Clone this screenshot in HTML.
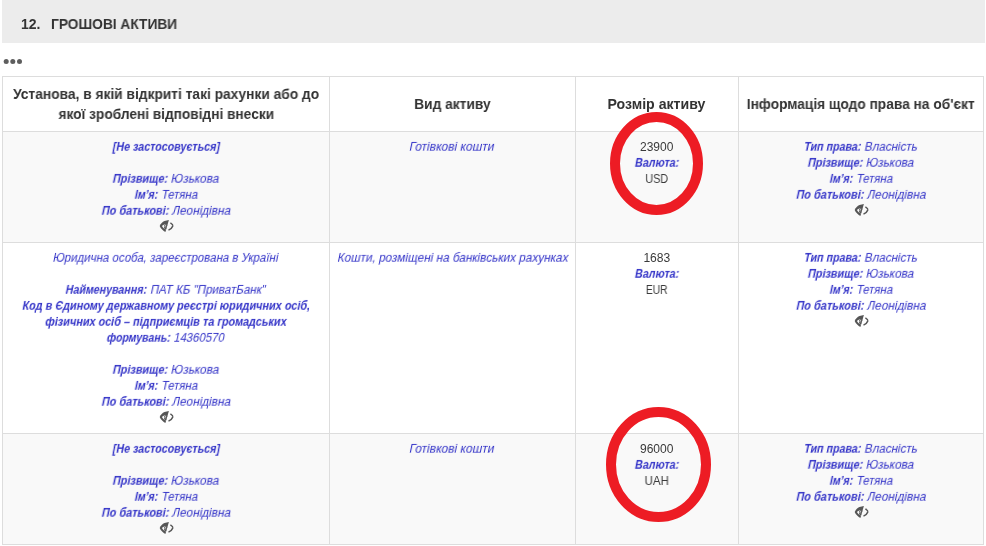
<!DOCTYPE html>
<html><head><meta charset="utf-8">
<style>
html,body{margin:0;padding:0;background:#fff;}
body{width:986px;height:546px;position:relative;overflow:hidden;font-family:"Liberation Sans",sans-serif;}
.t,.th{position:absolute;text-align:center;white-space:nowrap;}
.t{font:normal 12px/16px "Liberation Sans",sans-serif;color:#3535c8;}
.th{font:bold 14px/20px "Liberation Sans",sans-serif;color:#333;}
.t b{font-weight:bold;}
.s{display:inline-block;transform-origin:50% 50%;will-change:transform;}
.n{font-style:normal;color:#3a3a3a;}
.g{display:inline-block;white-space:nowrap;}
.gi{display:inline-block;transform-origin:0 50%;white-space:nowrap;}

.hdr{position:absolute;left:2px;top:0;width:983px;height:43px;background:#ececec;}
.hdr span{position:absolute;top:16px;font:bold 14px/16px "Liberation Sans",sans-serif;color:#333;}
.dots{position:absolute;left:3px;top:58px;}
.dots i{position:absolute;top:0;width:6px;height:6px;border-radius:50%;background:#555;}
.bg{position:absolute;left:2px;width:982px;}
.hl{position:absolute;left:2px;width:982px;height:1px;background:#ddd;}
.vl{position:absolute;top:76px;width:1px;height:469px;background:#ddd;}
.eye{position:absolute;width:20px;height:20px;}
</style></head><body>
<div class="hdr"><span style="left:19px;will-change:transform">12.</span><span style="left:49px;transform:scaleX(0.98);transform-origin:0 0;will-change:transform">ГРОШОВІ АКТИВИ</span></div>
<svg style="position:absolute;left:0;top:50px" width="30" height="20"><g fill="#5e5e5e"><circle cx="6.2" cy="11.4" r="2.5"/><circle cx="12.8" cy="11.4" r="2.5"/><circle cx="19.5" cy="11.4" r="2.5"/></g></svg>
<div class="bg" style="top:131px;height:111px;background:#f9f9f9"></div>
<div class="bg" style="top:433px;height:111px;background:#f9f9f9"></div>
<div class="hl" style="top:76px"></div>
<div class="hl" style="top:131px"></div>
<div class="hl" style="top:242px"></div>
<div class="hl" style="top:433px"></div>
<div class="hl" style="top:544px"></div>
<div class="vl" style="left:2px"></div>
<div class="vl" style="left:329px"></div>
<div class="vl" style="left:575px"></div>
<div class="vl" style="left:738px"></div>
<div class="vl" style="left:983px"></div>
<div class="th" style="left:3px;top:84px;width:326px"><span class=s style="transform:translateX(0.49px) scaleX(0.983)">Установа, в якій відкриті такі рахунки або до</span></div>
<div class="th" style="left:3px;top:104px;width:326px"><span class=s style="transform:translateX(-0.00px) scaleX(0.977)">якої зроблені відповідні внески</span></div>
<div class="th" style="left:330px;top:94px;width:245px"><span class=s style="transform:translateX(-0.49px) scaleX(0.982)">Вид активу</span></div>
<div class="th" style="left:576px;top:94px;width:162px"><span class=s style="transform:translateX(-1.01px) scaleX(1.010)">Розмір активу</span></div>
<div class="th" style="left:739px;top:94px;width:244px"><span class=s style="transform:translateX(-0.49px) scaleX(0.981)">Інформація щодо права на об'єкт</span></div>
<div class="t" style="left:3px;top:139px;width:326px"><span class=s style="transform:translateX(0.45px) scaleX(0.893) skewX(-12deg)"><b>[Не застосовується]</b></span></div>
<div class="t" style="left:3px;top:171px;width:326px"><span class=s style="transform:translateX(-0.00px) scaleX(1.019) skewX(-12deg)"><span class=g style="width:54.12px"><b class=gi style="transform:scaleX(0.89)">Прізвище:</b></span><span class=g style="width:50.36px"><span class=gi style="transform:scaleX(0.965)">&nbsp;Юзькова</span></span></span></div>
<div class="t" style="left:3px;top:187px;width:326px"><span class=s style="transform:translateX(0.49px) scaleX(0.984) skewX(-12deg)"><span class=g style="width:23.63px"><b class=gi style="transform:scaleX(0.89)">Ім’я:</b></span><span class=g style="width:40.11px"><span class=gi style="transform:scaleX(0.965)">&nbsp;Тетяна</span></span></span></div>
<div class="t" style="left:3px;top:203px;width:326px"><span class=s style="transform:translateX(1.02px) scaleX(1.016) skewX(-12deg)"><span class=g style="width:66.32px"><b class=gi style="transform:scaleX(0.89)">По батькові:</b></span><span class=g style="width:60.99px"><span class=gi style="transform:scaleX(0.965)">&nbsp;Леонідівна</span></span></span></div>
<div class="t" style="left:330px;top:139px;width:245px"><span class=s style="transform:translateX(-0.50px) scaleX(0.999) skewX(-12deg)">Готівкові кошти</span></div>
<div class="t" style="left:576px;top:139px;width:162px"><span class=s style="transform:translateX(-0.00px) scaleX(1.000)"><span class=n>23900</span></span></div>
<div class="t" style="left:576px;top:155px;width:162px"><span class=s style="transform:translateX(0.45px) scaleX(0.892) skewX(-12deg)"><b>Валюта:</b></span></div>
<div class="t" style="left:576px;top:171px;width:162px"><span class=s style="transform:translateX(-0.00px) scaleX(0.892)"><span class=n>USD</span></span></div>
<div class="t" style="left:739px;top:139px;width:244px"><span class=s style="transform:translateX(-0.50px) scaleX(1.003) skewX(-12deg)"><span class=g style="width:56.95px"><b class=gi style="transform:scaleX(0.89)">Тип права:</b></span><span class=g style="width:56.03px"><span class=gi style="transform:scaleX(0.965)">&nbsp;Власність</span></span></span></div>
<div class="t" style="left:739px;top:155px;width:244px"><span class=s style="transform:translateX(-0.00px) scaleX(1.017) skewX(-12deg)"><span class=g style="width:54.12px"><b class=gi style="transform:scaleX(0.89)">Прізвище:</b></span><span class=g style="width:50.36px"><span class=gi style="transform:scaleX(0.965)">&nbsp;Юзькова</span></span></span></div>
<div class="t" style="left:739px;top:171px;width:244px"><span class=s style="transform:translateX(0.49px) scaleX(0.984) skewX(-12deg)"><span class=g style="width:23.63px"><b class=gi style="transform:scaleX(0.89)">Ім’я:</b></span><span class=g style="width:40.11px"><span class=gi style="transform:scaleX(0.965)">&nbsp;Тетяна</span></span></span></div>
<div class="t" style="left:739px;top:187px;width:244px"><span class=s style="transform:translateX(1.02px) scaleX(1.023) skewX(-12deg)"><span class=g style="width:66.32px"><b class=gi style="transform:scaleX(0.89)">По батькові:</b></span><span class=g style="width:60.99px"><span class=gi style="transform:scaleX(0.965)">&nbsp;Леонідівна</span></span></span></div>
<div class="t" style="left:3px;top:441px;width:326px"><span class=s style="transform:translateX(0.45px) scaleX(0.893) skewX(-12deg)"><b>[Не застосовується]</b></span></div>
<div class="t" style="left:3px;top:473px;width:326px"><span class=s style="transform:translateX(-0.00px) scaleX(1.019) skewX(-12deg)"><span class=g style="width:54.12px"><b class=gi style="transform:scaleX(0.89)">Прізвище:</b></span><span class=g style="width:50.36px"><span class=gi style="transform:scaleX(0.965)">&nbsp;Юзькова</span></span></span></div>
<div class="t" style="left:3px;top:489px;width:326px"><span class=s style="transform:translateX(0.49px) scaleX(0.984) skewX(-12deg)"><span class=g style="width:23.63px"><b class=gi style="transform:scaleX(0.89)">Ім’я:</b></span><span class=g style="width:40.11px"><span class=gi style="transform:scaleX(0.965)">&nbsp;Тетяна</span></span></span></div>
<div class="t" style="left:3px;top:505px;width:326px"><span class=s style="transform:translateX(1.02px) scaleX(1.016) skewX(-12deg)"><span class=g style="width:66.32px"><b class=gi style="transform:scaleX(0.89)">По батькові:</b></span><span class=g style="width:60.99px"><span class=gi style="transform:scaleX(0.965)">&nbsp;Леонідівна</span></span></span></div>
<div class="t" style="left:330px;top:441px;width:245px"><span class=s style="transform:translateX(-0.50px) scaleX(0.999) skewX(-12deg)">Готівкові кошти</span></div>
<div class="t" style="left:576px;top:441px;width:162px"><span class=s style="transform:translateX(-0.00px) scaleX(1.003)"><span class=n>96000</span></span></div>
<div class="t" style="left:576px;top:457px;width:162px"><span class=s style="transform:translateX(0.45px) scaleX(0.892) skewX(-12deg)"><b>Валюта:</b></span></div>
<div class="t" style="left:576px;top:473px;width:162px"><span class=s style="transform:translateX(-0.00px) scaleX(0.954)"><span class=n>UAH</span></span></div>
<div class="t" style="left:739px;top:441px;width:244px"><span class=s style="transform:translateX(-0.50px) scaleX(1.003) skewX(-12deg)"><span class=g style="width:56.95px"><b class=gi style="transform:scaleX(0.89)">Тип права:</b></span><span class=g style="width:56.03px"><span class=gi style="transform:scaleX(0.965)">&nbsp;Власність</span></span></span></div>
<div class="t" style="left:739px;top:457px;width:244px"><span class=s style="transform:translateX(-0.00px) scaleX(1.017) skewX(-12deg)"><span class=g style="width:54.12px"><b class=gi style="transform:scaleX(0.89)">Прізвище:</b></span><span class=g style="width:50.36px"><span class=gi style="transform:scaleX(0.965)">&nbsp;Юзькова</span></span></span></div>
<div class="t" style="left:739px;top:473px;width:244px"><span class=s style="transform:translateX(0.49px) scaleX(0.984) skewX(-12deg)"><span class=g style="width:23.63px"><b class=gi style="transform:scaleX(0.89)">Ім’я:</b></span><span class=g style="width:40.11px"><span class=gi style="transform:scaleX(0.965)">&nbsp;Тетяна</span></span></span></div>
<div class="t" style="left:739px;top:489px;width:244px"><span class=s style="transform:translateX(1.02px) scaleX(1.023) skewX(-12deg)"><span class=g style="width:66.32px"><b class=gi style="transform:scaleX(0.89)">По батькові:</b></span><span class=g style="width:60.99px"><span class=gi style="transform:scaleX(0.965)">&nbsp;Леонідівна</span></span></span></div>
<div class="t" style="left:3px;top:250px;width:326px"><span class=s style="transform:translateX(-0.00px) scaleX(0.956) skewX(-12deg)">Юридична особа, зареєстрована в Україні</span></div>
<div class="t" style="left:3px;top:282px;width:326px"><span class=s style="transform:translateX(-0.50px) scaleX(0.997) skewX(-12deg)"><span class=g style="width:81.50px"><b class=gi style="transform:scaleX(0.89)">Найменування:</b></span><span class=g style="width:118.68px"><span class=gi style="transform:scaleX(0.965)">&nbsp;ПАТ КБ "ПриватБанк"</span></span></span></div>
<div class="t" style="left:3px;top:298px;width:326px"><span class=s style="transform:translateX(-0.00px) scaleX(0.908) skewX(-12deg)"><b>Код в Єдиному державному реєстрі юридичних осіб,</b></span></div>
<div class="t" style="left:3px;top:314px;width:326px"><span class=s style="transform:translateX(-0.00px) scaleX(0.907) skewX(-12deg)"><b>фізичних осіб – підприємців та громадських</b></span></div>
<div class="t" style="left:3px;top:330px;width:326px"><span class=s style="transform:translateX(-0.00px) scaleX(0.983) skewX(-12deg)"><span class=g style="width:64.75px"><b class=gi style="transform:scaleX(0.89)">формувань:</b></span><span class=g style="width:54.75px"><span class=gi style="transform:scaleX(0.965)">&nbsp;14360570</span></span></span></div>
<div class="t" style="left:3px;top:362px;width:326px"><span class=s style="transform:translateX(-0.00px) scaleX(1.019) skewX(-12deg)"><span class=g style="width:54.12px"><b class=gi style="transform:scaleX(0.89)">Прізвище:</b></span><span class=g style="width:50.36px"><span class=gi style="transform:scaleX(0.965)">&nbsp;Юзькова</span></span></span></div>
<div class="t" style="left:3px;top:378px;width:326px"><span class=s style="transform:translateX(0.49px) scaleX(0.984) skewX(-12deg)"><span class=g style="width:23.63px"><b class=gi style="transform:scaleX(0.89)">Ім’я:</b></span><span class=g style="width:40.11px"><span class=gi style="transform:scaleX(0.965)">&nbsp;Тетяна</span></span></span></div>
<div class="t" style="left:3px;top:394px;width:326px"><span class=s style="transform:translateX(1.02px) scaleX(1.016) skewX(-12deg)"><span class=g style="width:66.32px"><b class=gi style="transform:scaleX(0.89)">По батькові:</b></span><span class=g style="width:60.99px"><span class=gi style="transform:scaleX(0.965)">&nbsp;Леонідівна</span></span></span></div>
<div class="t" style="left:330px;top:250px;width:245px"><span class=s style="transform:translateX(0.49px) scaleX(0.981) skewX(-12deg)">Кошти, розміщені на банківських рахунках</span></div>
<div class="t" style="left:576px;top:250px;width:162px"><span class=s style="transform:translateX(-0.50px) scaleX(1.008)"><span class=n>1683</span></span></div>
<div class="t" style="left:576px;top:266px;width:162px"><span class=s style="transform:translateX(0.45px) scaleX(0.892) skewX(-12deg)"><b>Валюта:</b></span></div>
<div class="t" style="left:576px;top:282px;width:162px"><span class=s style="transform:translateX(-0.00px) scaleX(0.854)"><span class=n>EUR</span></span></div>
<div class="t" style="left:739px;top:250px;width:244px"><span class=s style="transform:translateX(-0.50px) scaleX(1.003) skewX(-12deg)"><span class=g style="width:56.95px"><b class=gi style="transform:scaleX(0.89)">Тип права:</b></span><span class=g style="width:56.03px"><span class=gi style="transform:scaleX(0.965)">&nbsp;Власність</span></span></span></div>
<div class="t" style="left:739px;top:266px;width:244px"><span class=s style="transform:translateX(-0.00px) scaleX(1.017) skewX(-12deg)"><span class=g style="width:54.12px"><b class=gi style="transform:scaleX(0.89)">Прізвище:</b></span><span class=g style="width:50.36px"><span class=gi style="transform:scaleX(0.965)">&nbsp;Юзькова</span></span></span></div>
<div class="t" style="left:739px;top:282px;width:244px"><span class=s style="transform:translateX(0.49px) scaleX(0.984) skewX(-12deg)"><span class=g style="width:23.63px"><b class=gi style="transform:scaleX(0.89)">Ім’я:</b></span><span class=g style="width:40.11px"><span class=gi style="transform:scaleX(0.965)">&nbsp;Тетяна</span></span></span></div>
<div class="t" style="left:739px;top:298px;width:244px"><span class=s style="transform:translateX(1.02px) scaleX(1.023) skewX(-12deg)"><span class=g style="width:66.32px"><b class=gi style="transform:scaleX(0.89)">По батькові:</b></span><span class=g style="width:60.99px"><span class=gi style="transform:scaleX(0.965)">&nbsp;Леонідівна</span></span></span></div>
<svg class="eye" style="left:156px;top:216px" width="20" height="20" viewBox="0 0 20 20"><defs><clipPath id="ec0"><path d="M0,0 L14.04,0 L8.2,20 L0,20 Z"/></clipPath></defs><path d="M12.9,3.9 L9.4,15.9 C7.2,14.8 4.8,12.6 3.7,9.9 C4.7,7.6 6.4,5.8 8.5,5 C10,4.5 11.4,4.1 12.9,3.9 Z" fill="#555"/><path d="M11.7,8 L10.1,13.5 C8.4,13 7,11.8 5.9,10.1 C7,8.8 9.1,8 11.7,8 Z" fill="#f9f9f9"/><circle cx="10.6" cy="10.7" r="2.6" fill="#555" clip-path="url(#ec0)"/><path d="M10.1,9.3 C9.1,9.5 8.7,10.4 9.1,11.3" stroke="#f9f9f9" stroke-width="0.8" fill="none"/><path d="M14.4,6.9 C16.2,8 17,9.2 16.8,10 C16.2,11.8 14.6,13.2 12.5,14.1" stroke="#555" stroke-width="1.5" fill="none"/></svg>
<svg class="eye" style="left:851px;top:200px" width="20" height="20" viewBox="0 0 20 20"><defs><clipPath id="ec1"><path d="M0,0 L14.04,0 L8.2,20 L0,20 Z"/></clipPath></defs><path d="M12.9,3.9 L9.4,15.9 C7.2,14.8 4.8,12.6 3.7,9.9 C4.7,7.6 6.4,5.8 8.5,5 C10,4.5 11.4,4.1 12.9,3.9 Z" fill="#555"/><path d="M11.7,8 L10.1,13.5 C8.4,13 7,11.8 5.9,10.1 C7,8.8 9.1,8 11.7,8 Z" fill="#f9f9f9"/><circle cx="10.6" cy="10.7" r="2.6" fill="#555" clip-path="url(#ec1)"/><path d="M10.1,9.3 C9.1,9.5 8.7,10.4 9.1,11.3" stroke="#f9f9f9" stroke-width="0.8" fill="none"/><path d="M14.4,6.9 C16.2,8 17,9.2 16.8,10 C16.2,11.8 14.6,13.2 12.5,14.1" stroke="#555" stroke-width="1.5" fill="none"/></svg>
<svg class="eye" style="left:156px;top:407px" width="20" height="20" viewBox="0 0 20 20"><defs><clipPath id="ec2"><path d="M0,0 L14.04,0 L8.2,20 L0,20 Z"/></clipPath></defs><path d="M12.9,3.9 L9.4,15.9 C7.2,14.8 4.8,12.6 3.7,9.9 C4.7,7.6 6.4,5.8 8.5,5 C10,4.5 11.4,4.1 12.9,3.9 Z" fill="#555"/><path d="M11.7,8 L10.1,13.5 C8.4,13 7,11.8 5.9,10.1 C7,8.8 9.1,8 11.7,8 Z" fill="#fff"/><circle cx="10.6" cy="10.7" r="2.6" fill="#555" clip-path="url(#ec2)"/><path d="M10.1,9.3 C9.1,9.5 8.7,10.4 9.1,11.3" stroke="#fff" stroke-width="0.8" fill="none"/><path d="M14.4,6.9 C16.2,8 17,9.2 16.8,10 C16.2,11.8 14.6,13.2 12.5,14.1" stroke="#555" stroke-width="1.5" fill="none"/></svg>
<svg class="eye" style="left:851px;top:311px" width="20" height="20" viewBox="0 0 20 20"><defs><clipPath id="ec3"><path d="M0,0 L14.04,0 L8.2,20 L0,20 Z"/></clipPath></defs><path d="M12.9,3.9 L9.4,15.9 C7.2,14.8 4.8,12.6 3.7,9.9 C4.7,7.6 6.4,5.8 8.5,5 C10,4.5 11.4,4.1 12.9,3.9 Z" fill="#555"/><path d="M11.7,8 L10.1,13.5 C8.4,13 7,11.8 5.9,10.1 C7,8.8 9.1,8 11.7,8 Z" fill="#fff"/><circle cx="10.6" cy="10.7" r="2.6" fill="#555" clip-path="url(#ec3)"/><path d="M10.1,9.3 C9.1,9.5 8.7,10.4 9.1,11.3" stroke="#fff" stroke-width="0.8" fill="none"/><path d="M14.4,6.9 C16.2,8 17,9.2 16.8,10 C16.2,11.8 14.6,13.2 12.5,14.1" stroke="#555" stroke-width="1.5" fill="none"/></svg>
<svg class="eye" style="left:156px;top:518px" width="20" height="20" viewBox="0 0 20 20"><defs><clipPath id="ec4"><path d="M0,0 L14.04,0 L8.2,20 L0,20 Z"/></clipPath></defs><path d="M12.9,3.9 L9.4,15.9 C7.2,14.8 4.8,12.6 3.7,9.9 C4.7,7.6 6.4,5.8 8.5,5 C10,4.5 11.4,4.1 12.9,3.9 Z" fill="#555"/><path d="M11.7,8 L10.1,13.5 C8.4,13 7,11.8 5.9,10.1 C7,8.8 9.1,8 11.7,8 Z" fill="#f9f9f9"/><circle cx="10.6" cy="10.7" r="2.6" fill="#555" clip-path="url(#ec4)"/><path d="M10.1,9.3 C9.1,9.5 8.7,10.4 9.1,11.3" stroke="#f9f9f9" stroke-width="0.8" fill="none"/><path d="M14.4,6.9 C16.2,8 17,9.2 16.8,10 C16.2,11.8 14.6,13.2 12.5,14.1" stroke="#555" stroke-width="1.5" fill="none"/></svg>
<svg class="eye" style="left:851px;top:502px" width="20" height="20" viewBox="0 0 20 20"><defs><clipPath id="ec5"><path d="M0,0 L14.04,0 L8.2,20 L0,20 Z"/></clipPath></defs><path d="M12.9,3.9 L9.4,15.9 C7.2,14.8 4.8,12.6 3.7,9.9 C4.7,7.6 6.4,5.8 8.5,5 C10,4.5 11.4,4.1 12.9,3.9 Z" fill="#555"/><path d="M11.7,8 L10.1,13.5 C8.4,13 7,11.8 5.9,10.1 C7,8.8 9.1,8 11.7,8 Z" fill="#f9f9f9"/><circle cx="10.6" cy="10.7" r="2.6" fill="#555" clip-path="url(#ec5)"/><path d="M10.1,9.3 C9.1,9.5 8.7,10.4 9.1,11.3" stroke="#f9f9f9" stroke-width="0.8" fill="none"/><path d="M14.4,6.9 C16.2,8 17,9.2 16.8,10 C16.2,11.8 14.6,13.2 12.5,14.1" stroke="#555" stroke-width="1.5" fill="none"/></svg>
<svg style="position:absolute;left:0;top:0" width="986" height="546">
<ellipse cx="656.5" cy="163.5" rx="41.5" ry="46.5" fill="none" stroke="#ed1c24" stroke-width="10"/>
<ellipse cx="658.5" cy="464.5" rx="47.5" ry="52.5" fill="none" stroke="#ed1c24" stroke-width="10"/>
</svg>
</body></html>
